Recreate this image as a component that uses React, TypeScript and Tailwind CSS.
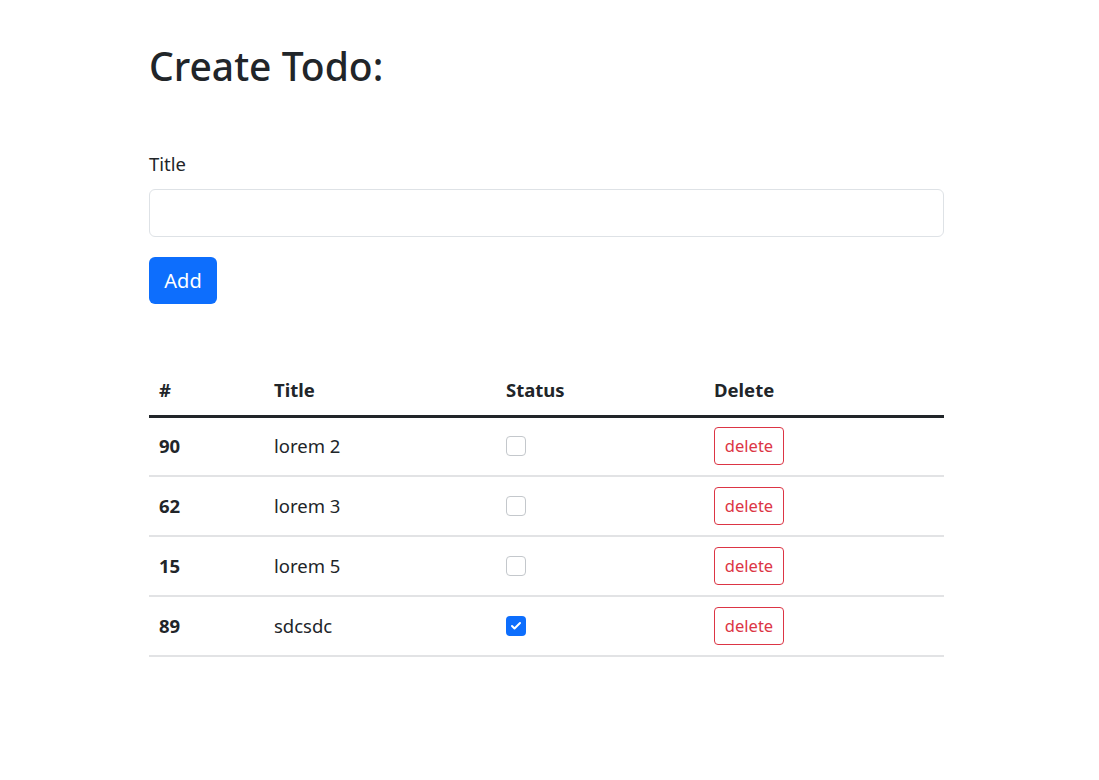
import { Check } from 'lucide-react';

const todos = [
  { id: 90, title: 'lorem 2', done: false },
  { id: 62, title: 'lorem 3', done: false },
  { id: 15, title: 'lorem 5', done: false },
  { id: 89, title: 'sdcsdc', done: true },
];

export default function App() {
  return (
    <div className="min-h-screen bg-white text-[#212529]" style={{ fontFamily: '"Noto Sans", "Open Sans", sans-serif' }}>
      <div className="ml-[149px] w-[795px] pt-[42px]">
        <h1 className="text-[39px] leading-[47px] font-medium">Create Todo:</h1>

        <div className="mt-[61px]">
          <label className="block text-[18.5px] leading-[27px]">Title</label>
          <input
            type="text"
            className="mt-[12px] block h-[48px] w-full rounded-md border border-[#dee2e6] px-4 text-xl outline-none"
          />
          <button className="mt-[20px] h-[47px] w-[68px] rounded-md bg-[#0d6efd] text-xl text-white">Add</button>
        </div>

        <table className="mt-[62px] w-full table-fixed border-collapse text-[18.5px]">
          <thead>
            <tr className="h-[50px] border-b-[3px] border-[#212529]">
              <th className="w-[117px] px-[10px] text-left font-bold">#</th>
              <th className="w-[232px] px-2 text-left font-bold">Title</th>
              <th className="w-[208px] px-2 text-left font-bold">Status</th>
              <th className="px-2 text-left font-bold">Delete</th>
            </tr>
          </thead>
          <tbody>
            {todos.map((t) => (
              <tr key={t.id} className="h-[60px] border-b-2 border-[#e2e3e5]">
                <td className="px-[10px] font-bold">{t.id}</td>
                <td className="px-2">{t.title}</td>
                <td className="px-2">
                  {t.done ? (
                    <span className="flex h-[20px] w-[20px] items-center justify-center rounded-[4px] bg-[#0d6efd]">
                      <Check className="h-[12px] w-[12px] text-white" strokeWidth={4} />
                    </span>
                  ) : (
                    <span className="block h-[20px] w-[20px] rounded-[4px] border border-[#c4c8cc] bg-white" />
                  )}
                </td>
                <td className="px-2">
                  <button className="h-[38px] w-[70px] rounded-[4px] border border-[#dc3545] text-[16.5px] text-[#dc3545]">
                    delete
                  </button>
                </td>
              </tr>
            ))}
          </tbody>
        </table>
      </div>
    </div>
  );
}
